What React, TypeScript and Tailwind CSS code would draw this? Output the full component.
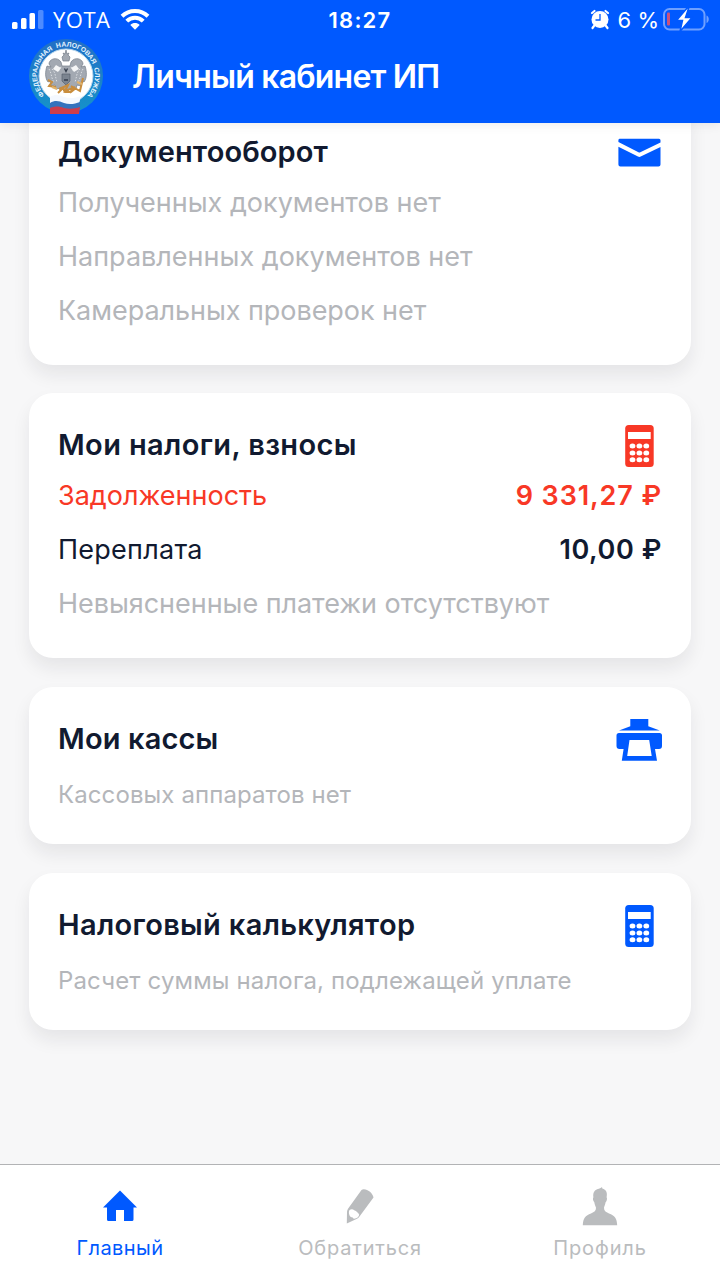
import type { ReactNode } from "react";

interface Row {
  label: string;
  labelClass: string;
  value?: string;
  valueClass?: string;
}

const MailIcon = () => (
  <svg className="mt-px" width="46" height="46" viewBox="0 0 46 46" fill="#0059ff">
    <path d="M4 8.800H43a1.500 1.500 0 0 1 1.500 1.500V12.500L24.300 22.300a2 2 0 0 1-1.800 0L2.400 12V10a1.500 1.500 0 0 1 1.600-1.200z" />
    <path d="M2.400 16.800L22 26.600a3 3 0 0 0 2.700 0L44.500 17V34.500a2 2 0 0 1-2 2H4.400a2 2 0 0 1-2-2z" />
  </svg>
);

const CalculatorIcon = ({ color }: { color: string }) => (
  <svg className="mt-[2px]" width="46" height="46" viewBox="0 0 46 46">
    <rect x="9.200" y="2" width="28.500" height="42" rx="3.500" fill={color} />
    <rect x="12" y="9" width="22.700" height="7" fill="#fff" />
    {[23, 30, 36.800].map((y) =>
      [16.500, 23.400, 30.300].map((x) => (
        <ellipse key={`${x}-${y}`} cx={x} cy={y} rx="2.900" ry="2.500" fill="#fff" />
      ))
    )}
  </svg>
);

const PrinterIcon = () => (
  <svg className="mt-1" width="46" height="46" viewBox="0 0 46 46" fill="#0059ff">
    <path d="M14.300 1h18v7.200l11.500 4.200H3l11.300-4.200z" />
    <path
      fillRule="evenodd"
      d="M3 15h40.500a2.500 2.500 0 0 1 2.500 2.500V28a3 3 0 0 1-3 3h-4l2 11.700H5.800L7.600 31H3.500A3 3 0 0 1 .5 28V17.500A2.500 2.500 0 0 1 3 15zM13.500 22l-2.300 16h24.500L33.200 22z"
    />
  </svg>
);

const HomeIcon = () => (
  <svg width="36" height="40" viewBox="0 0 36 40" fill="#0059ff">
    <path d="M18 4.500L35 21.500H31.500V33.500a1.500 1.500 0 0 1-1.500 1.500H22V24h-8v11H6.500A1.500 1.500 0 0 1 5 33.500v-12H1z" />
  </svg>
);

const PencilIcon = () => (
  <svg width="36" height="40" viewBox="0 0 36 40">
    <path fill="#babcbe" d="M19.500 4Q21 2.700 23.500 3.500C27.500 4.500 31 8 31.500 11.500L17.500 30.500Q16.500 32.200 14.500 33L4.800 37.500 5 26Q5 24.500 6 22.800z" />
    <path fill="#fff" d="M7.200 24.600c1.500-1.500 3.500-1.700 5-.3 2.500 1 4 2.500 5 4.500-.3 2-1.900 3.300-4 3.800-1.300.3-2-.2-2.500-1.200-1.700-.1-3-1-3.300-2.500-.5-1-.7-2.800-.2-4.300z" />
  </svg>
);

const PersonIcon = () => (
  <svg width="36" height="40" viewBox="0 0 36 40" fill="#babcbe">
    <path d="M20 1l.3 1.600c3.900 1 5.300 4.200 4.300 8.700.9 1 .2 4-1 4.900-.3 2.200-1.300 4-1.600 5.500 0 3 1.500 4.200 5 5.700 5.600 2.300 8 4.600 8.200 11.900H.8c.2-7.300 2.600-9.600 8.200-11.900 3.500-1.500 5-2.700 5-5.700-.5-1.600-1.400-3.300-1.700-5.500-1.300-1-1.800-4-.9-4.900-.7-4.800 1.300-7.300 4.400-8.200 1.500-.4 3.100-1 4.200-2.100z" />
  </svg>
);

// Emblem: blue ring with lettering, two-headed eagle and the flag below
const Emblem = () => (
  <svg width="76" height="80" viewBox="0 0 76 80">
    <defs>
      <path id="ring" d="M17.100 58.700A29 29 0 1 1 58.900 58.700" />
      <linearGradient id="rim" x1="0" y1="0" x2="0" y2="1">
        <stop offset="0" stopColor="#226fc6" />
        <stop offset="1" stopColor="#1593c9" />
      </linearGradient>
    </defs>
    <circle cx="38" cy="39" r="37" fill="url(#rim)" />
    <circle cx="38" cy="39" r="27" fill="#fff" stroke="#b9d7ee" strokeWidth="1" />
    <text fill="#e4f3ff" fontSize="6.800" fontWeight="700" fontFamily="Liberation Sans, sans-serif" wordSpacing="2">
      <textPath href="#ring" startOffset="1">
        ФЕДЕРАЛЬНАЯ НАЛОГОВАЯ СЛУЖБА
      </textPath>
    </text>
    <g fill="#a3a9b2" stroke="#747c88" strokeWidth=".7">
      <path d="M34 20l2-2-1-2 2 1 1-4 1 4 2-1-1 2 2 2-1 4h-6z" />
      <path d="M33 25c-4-6-12-3-12 2l2 3-4-1c-2 6-2 12 1 16l2-1 1 5 4-1 1 4 5-1 5 5 5-5 5 1 1-4 4 1 1-5 2 1c3-4 3-10 1-16l-4 1 2-3c0-5-8-8-12-2l-1 4h-8z" />
    </g>
    <g fill="none" stroke="#dde0e4" strokeWidth="1" strokeDasharray="1.500 1.500">
      <path d="M21 32c3 5 2 9 5 13M24 32c4 4 3 8 5 13M55 32c-3 5-2 9-5 13M52 32c-4 4-3 8-5 13M33 30l-3 5M43 30l3 5" />
    </g>
    <path d="M28 28l5 3-3 4-5-3zM48 28l3 4-5 3-3-4z" fill="#f5f6f7" />
    <path d="M34 37h8v7l-4 4-4-4z" fill="#7b8490" stroke="#56606d" strokeWidth=".7" />
    <path d="M36.500 31.500l1.500 3 1.500-3M36 43h4" fill="none" stroke="#343d4c" strokeWidth="1.300" />
    <g fill="none" stroke="#c98d3d" strokeWidth="2">
      <path d="M20 43l4 2-3 4 7 1M55 41l-3 13-9-5M31 52l9-4-3 6 8-3-3 5M30 56l5-5 2 4 6 0 5-4" />
      <path d="M24 50l5 2M49 45l5 2" stroke="#e0b36c" />
    </g>
    <path d="M22 60c5-3 9-2 14 0 6 2 11 1 17-1l-2 8c-5 2-9 2-15 0-5-2-8-2-14 0z" fill="#f4f8ff" />
    <path d="M22 66c5-3 9-2 14 0 5 2 11 1 16-1v6c-5 2-10 2-16 0-5-1-9-1-14 1z" fill="#3472bd" />
    <path d="M22 71c5-2 9-2 14 0 5 1 11 1 16-1l-1 7H22z" fill="#cd3d4c" />
  </svg>
);

const StatusBar = () => (
  <div className="flex h-10 w-full items-center justify-between text-[22px] leading-6 text-white">
    <div className="flex w-[240px] items-center pl-3">
      <svg width="32" height="20" viewBox="0 0 32 20" fill="#fff">
        <rect x="0" y="12" width="5.500" height="7" rx="1.500" />
        <rect x="9" y="8" width="5.500" height="11" rx="1.500" />
        <rect x="17.500" y="3" width="5.500" height="16" rx="1.500" />
        <rect x="26" y="0" width="5.500" height="19" rx="1.500" opacity=".3" />
      </svg>
      <span className="-mt-[2px] ml-[9px] w-[59px] whitespace-nowrap font-['Open_Sans',sans-serif] tracking-[0.5px]">
        YOTA
      </span>
      <svg className="-mt-[2px] ml-2" width="30" height="22" viewBox="0 0 30 22">
        <g fill="none" stroke="#fff" strokeWidth="4">
          <path d="M2 8.200C9.200 1.200 20.800 1.200 28 8.200" />
          <path d="M6.800 13.200C11.400 8.600 18.600 8.600 23.200 13.200" />
        </g>
        <path d="M10.300 17c2.700-2.600 6.700-2.600 9.400 0L15 21.700z" fill="#fff" />
      </svg>
    </div>
    <span className="font-semibold tracking-[1.200px]">18:27</span>
    <div className="flex w-[240px] items-center justify-end pr-[10px]">
      <svg className="-mt-[3px]" width="20" height="22" viewBox="0 0 20 22">
        <circle cx="10" cy="11.500" r="8.500" fill="#fff" />
        <path d="M2 5L4.500 3M18 5L15.500 3M4 18l-1.500 2M16 18l1.500 2" stroke="#fff" strokeWidth="2.200" strokeLinecap="round" />
        <path d="M10 6v6H5.500" fill="none" stroke="#0059ff" strokeWidth="1.300" />
      </svg>
      <span className="ml-2 whitespace-nowrap">6 %</span>
      <svg className="-mt-[2px] ml-1" width="47" height="24" viewBox="0 0 47 24">
        <rect x="1" y="2" width="40.500" height="20.500" rx="5.500" fill="none" stroke="#6fa0ff" strokeWidth="2" />
        <path d="M43.500 8.500c3 1 3 6.500 0 7.500z" fill="#6fa0ff" />
        <rect x="4" y="5.500" width="3" height="13" rx="1" fill="#c9527c" />
        <path d="M25 0L13.500 13.500h6L17 24.500 29 10.500h-6.500L26 0z" fill="#fff" stroke="#0059ff" strokeWidth="1.500" />
      </svg>
    </div>
  </div>
);

const Card = ({ title, titleClass, icon, children }: { title: string; titleClass: string; icon: ReactNode; children: ReactNode }) => (
  <section className="rounded-[24px] bg-white px-[29px] pt-7 shadow-[0_10px_18px_rgba(20,25,40,0.08)]">
    <div className="flex h-12 items-center justify-between">
      <h2 className={`whitespace-nowrap text-[29px] font-semibold text-[#111a30] ${titleClass}`}>{title}</h2>
      {icon}
    </div>
    {children}
  </section>
);

const Rows = ({ rows }: { rows: Row[] }) => (
  <div className="pb-[27px]">
    {rows.map((row) => (
      <div key={row.label} className="flex h-[54px] items-center justify-between whitespace-nowrap text-[27px]">
        <span className={row.labelClass}>{row.label}</span>
        {row.value && <span className={`font-semibold ${row.valueClass}`}>{row.value}</span>}
      </div>
    ))}
  </div>
);

const documentRows: Row[] = [
  { label: "Полученных документов нет", labelClass: "text-[#b4b6ba]" },
  { label: "Направленных документов нет", labelClass: "text-[#b4b6ba]" },
  { label: "Камеральных проверок нет", labelClass: "text-[#b4b6ba] tracking-[-0.050px]" },
];

const taxRows: Row[] = [
  { label: "Задолженность", labelClass: "text-[#f83826]", value: "9 331,27 ₽", valueClass: "text-[#f83826] tracking-[0.900px]" },
  { label: "Переплата", labelClass: "text-[#111a30] tracking-[0.250px]", value: "10,00 ₽", valueClass: "text-[#111a30] tracking-[0.600px]" },
  { label: "Невыясненные платежи отсутствуют", labelClass: "text-[#b4b6ba] tracking-[-0.040px]" },
];

const tabs = [
  { label: "Главный", icon: <HomeIcon />, color: "text-[#0059ff]", labelClass: "tracking-[0.400px]" },
  { label: "Обратиться", icon: <PencilIcon />, color: "text-[#babcbe]", labelClass: "tracking-[0.800px]" },
  { label: "Профиль", icon: <PersonIcon />, color: "text-[#babcbe]", labelClass: "tracking-[0.900px]" },
];

const App = () => {
  return (
    <div className="flex h-[1280px] w-[720px] flex-col overflow-hidden bg-[#f7f7f8] font-['Inter',sans-serif]">
      {/* Header */}
      <header className="z-10 h-[123px] shrink-0 bg-[#0059ff] shadow-[0_2px_10px_rgba(0,0,0,0.08)]">
        <StatusBar />
        <div className="-mt-[3px] flex items-center pl-7">
          <Emblem />
          <h1 className="-mt-px ml-7 whitespace-nowrap text-[32px] font-semibold leading-10 tracking-[-0.800px] text-white">
            Личный кабинет ИП
          </h1>
        </div>
      </header>

      {/* Cards, scrolled up under the header */}
      <main className="flex min-h-0 flex-1 flex-col overflow-hidden px-[29px]">
        <div className="-mt-[23px] flex flex-col gap-[29px]">
          <Card title="Документооборот" titleClass="tracking-[0.100px]" icon={<MailIcon />}>
            <Rows rows={documentRows} />
          </Card>
          <div className="-mt-px flex flex-col gap-[29px]">
            <Card title="Мои налоги, взносы" titleClass="tracking-[0.370px]" icon={<CalculatorIcon color="#f83826" />}>
              <Rows rows={taxRows} />
            </Card>
            <Card title="Мои кассы" titleClass="tracking-[0.150px]" icon={<PrinterIcon />}>
              <p className="h-[81px] whitespace-nowrap text-[24px] leading-[64px] tracking-[0.100px] text-[#b4b6ba]">
                Кассовых аппаратов нет
              </p>
            </Card>
            <Card title="Налоговый калькулятор" titleClass="tracking-[0.330px]" icon={<CalculatorIcon color="#0059ff" />}>
              <p className="h-[81px] whitespace-nowrap text-[24px] leading-[64px] tracking-[0.140px] text-[#b4b6ba]">
                Расчет суммы налога, подлежащей уплате
              </p>
            </Card>
          </div>
        </div>
      </main>

      {/* Bottom tabs */}
      <nav className="grid h-[116px] shrink-0 grid-cols-3 border-t border-[#b2b3b5] bg-white">
        {tabs.map((tab) => (
          <div key={tab.label} className={`flex flex-col items-center pt-[21px] ${tab.color}`}>
            {tab.icon}
            <span className={`mt-[6px] text-[20px] leading-8 ${tab.labelClass}`}>{tab.label}</span>
          </div>
        ))}
      </nav>
    </div>
  );
};

export default App;
